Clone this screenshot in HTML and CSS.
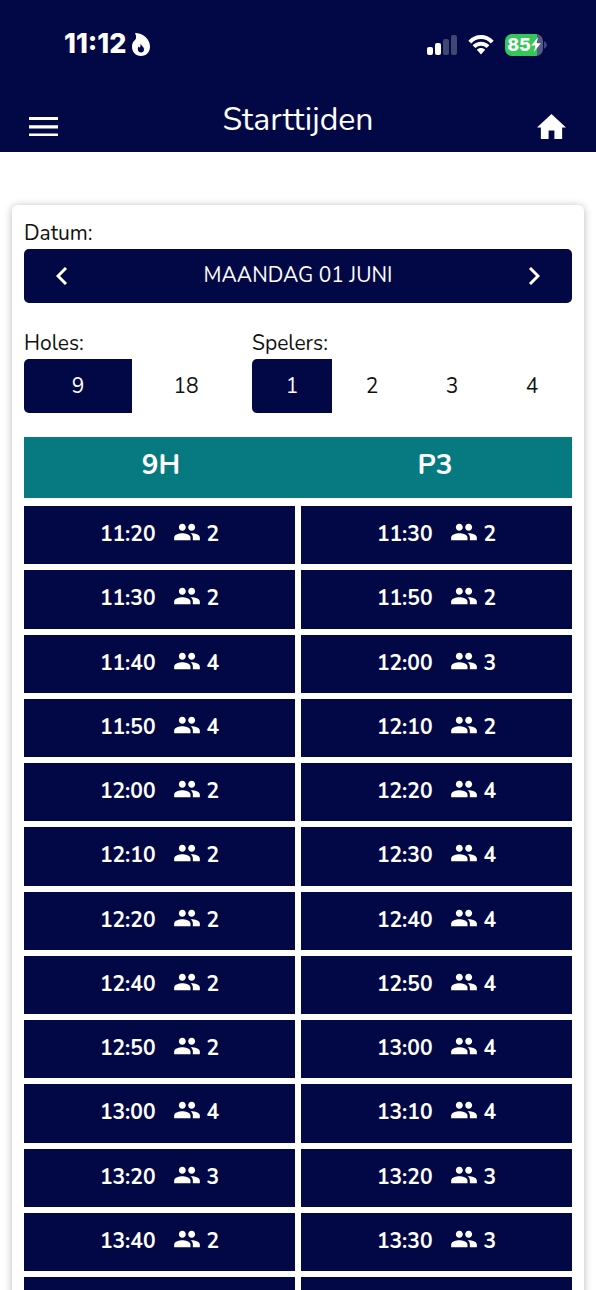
FILE: index.html
```html
<!DOCTYPE html>
<html lang="nl">
<head>
<meta charset="utf-8">
<meta name="viewport" content="width=device-width, initial-scale=1">
<title>Starttijden</title>
<link rel="stylesheet" href="styles.css">
</head>
<body>
<svg class="sprite" aria-hidden="true">
  <symbol id="people" viewBox="0 0 24 24"><path d="M16 11c1.660 0 2.990-1.340 2.990-3S17.660 5 16 5s-3 1.340-3 3 1.340 3 3 3zm-8 0c1.660 0 2.990-1.340 2.990-3S9.660 5 8 5 5 6.340 5 8s1.340 3 3 3zm0 2c-2.330 0-7 1.170-7 3.500V19h14v-2.500c0-2.330-4.670-3.500-7-3.500zm8 0c-.29 0-.62.020-.97.050 1.160.84 1.970 1.970 1.970 3.450V19h6v-2.500c0-2.330-4.670-3.500-7-3.500z"/></symbol>
</svg>
<header class="top">
  <div class="status">
    <div class="status-left">
      <span class="clock">11:12</span>
      <svg class="flame" viewBox="0 0 18 23" aria-hidden="true"><path class="flame-body" d="M3 0C11 0 18 6 18 13.500C18 19 14.500 23 9 23S0 19 0 13.500C0 10.500 1 8.500 3 7C4.500 5.500 4.500 3 3 0Z"/><path class="flame-core" d="M8.500 10C9 13 12 13.500 12 16.200C12 18.500 10.800 19.500 9.200 19.500C7 19.500 5.800 18 5.800 16.200C5.800 15 6.200 14 6.700 13.500L7.800 14.800C8.500 13.500 8.700 12 8.500 10Z"/></svg>
    </div>
    <div class="status-right">
      <svg class="signal" viewBox="0 0 30 20" aria-hidden="true"><rect x="0" y="12" width="6" height="8" rx="2"/><rect x="8" y="8" width="6" height="12" rx="2"/><rect class="dim" x="16" y="4" width="6" height="16" rx="2"/><rect class="dim" x="24" y="0" width="6" height="20" rx="2"/></svg>
      <svg class="wifi" viewBox="0 0 26 20" aria-hidden="true"><path class="arc" d="M1.800 7.200C8 .4 18 .4 24.200 7.200M6 11.700C10 7.600 16 7.600 20 11.700"/><path d="M8.800 14.800C11.200 12.400 14.800 12.400 17.200 14.800L13 19.500Z"/></svg>
      <div class="battery"><span class="level">85</span><svg class="bolt" viewBox="0 0 9 14" aria-hidden="true"><path d="M6.500 0L0 8H4L2.500 14L9 5.800H5Z"/></svg></div>
      <svg class="tip" viewBox="0 0 3 8" aria-hidden="true"><path d="M0 0Q3 1.500 3 4T0 8Z"/></svg>
    </div>
  </div>
  <nav class="bar">
    <button class="icon-button" type="button" aria-label="Menu"><svg viewBox="0 0 28 19"><path d="M0 0h28v3H0zM0 8h28v3H0zM0 16h28v3H0z"/></svg></button>
    <h1 class="title">Starttijden</h1>
    <a class="icon-button home" href="#" aria-label="Home"><svg viewBox="0 0 30 26"><path d="M12 26v-9h6v9h8V14h4L15 0 0 14h4v12z"/></svg></a>
  </nav>
</header>
<main class="content">
  <section class="card">
    <div class="label" id="date-label">Datum:</div>
    <div class="date" role="group" aria-labelledby="date-label">
      <button class="step" type="button" aria-label="Vorige dag"><svg viewBox="0 0 12 18"><path d="M10 1L2 9L10 17"/></svg></button>
      <span>MAANDAG 01 JUNI</span>
      <button class="step" type="button" aria-label="Volgende dag"><svg viewBox="0 0 12 18"><path d="M2 1L10 9L2 17"/></svg></button>
    </div>
    <div class="filters">
      <fieldset class="filter">
        <legend class="label">Holes:</legend>
        <div class="segments">
          <label class="segment"><input type="radio" name="holes" checked><span>9</span></label>
          <label class="segment"><input type="radio" name="holes"><span>18</span></label>
        </div>
      </fieldset>
      <fieldset class="filter">
        <legend class="label">Spelers:</legend>
        <div class="segments">
          <label class="segment"><input type="radio" name="players" checked><span>1</span></label>
          <label class="segment"><input type="radio" name="players"><span>2</span></label>
          <label class="segment"><input type="radio" name="players"><span>3</span></label>
          <label class="segment"><input type="radio" name="players"><span>4</span></label>
        </div>
      </fieldset>
    </div>
    <div class="courses"><h2 class="course">9H</h2><h2 class="course">P3</h2></div>
    <div class="slots">
      <button class="slot" type="button"><span>11:20</span><svg class="people"><use href="#people"/></svg><span>2</span></button>
      <button class="slot" type="button"><span>11:30</span><svg class="people"><use href="#people"/></svg><span>2</span></button>
      <button class="slot" type="button"><span>11:30</span><svg class="people"><use href="#people"/></svg><span>2</span></button>
      <button class="slot" type="button"><span>11:50</span><svg class="people"><use href="#people"/></svg><span>2</span></button>
      <button class="slot" type="button"><span>11:40</span><svg class="people"><use href="#people"/></svg><span>4</span></button>
      <button class="slot" type="button"><span>12:00</span><svg class="people"><use href="#people"/></svg><span>3</span></button>
      <button class="slot" type="button"><span>11:50</span><svg class="people"><use href="#people"/></svg><span>4</span></button>
      <button class="slot" type="button"><span>12:10</span><svg class="people"><use href="#people"/></svg><span>2</span></button>
      <button class="slot" type="button"><span>12:00</span><svg class="people"><use href="#people"/></svg><span>2</span></button>
      <button class="slot" type="button"><span>12:20</span><svg class="people"><use href="#people"/></svg><span>4</span></button>
      <button class="slot" type="button"><span>12:10</span><svg class="people"><use href="#people"/></svg><span>2</span></button>
      <button class="slot" type="button"><span>12:30</span><svg class="people"><use href="#people"/></svg><span>4</span></button>
      <button class="slot" type="button"><span>12:20</span><svg class="people"><use href="#people"/></svg><span>2</span></button>
      <button class="slot" type="button"><span>12:40</span><svg class="people"><use href="#people"/></svg><span>4</span></button>
      <button class="slot" type="button"><span>12:40</span><svg class="people"><use href="#people"/></svg><span>2</span></button>
      <button class="slot" type="button"><span>12:50</span><svg class="people"><use href="#people"/></svg><span>4</span></button>
      <button class="slot" type="button"><span>12:50</span><svg class="people"><use href="#people"/></svg><span>2</span></button>
      <button class="slot" type="button"><span>13:00</span><svg class="people"><use href="#people"/></svg><span>4</span></button>
      <button class="slot" type="button"><span>13:00</span><svg class="people"><use href="#people"/></svg><span>4</span></button>
      <button class="slot" type="button"><span>13:10</span><svg class="people"><use href="#people"/></svg><span>4</span></button>
      <button class="slot" type="button"><span>13:20</span><svg class="people"><use href="#people"/></svg><span>3</span></button>
      <button class="slot" type="button"><span>13:20</span><svg class="people"><use href="#people"/></svg><span>3</span></button>
      <button class="slot" type="button"><span>13:40</span><svg class="people"><use href="#people"/></svg><span>2</span></button>
      <button class="slot" type="button"><span>13:30</span><svg class="people"><use href="#people"/></svg><span>3</span></button>
      <button class="slot" type="button"></button>
      <button class="slot" type="button"></button>
    </div>
  </section>
</main>
</body>
</html>
```
FILE: styles.css
```css
:root {
  --navy: #020845;
  --teal: #067a80;
}

* { box-sizing: border-box; }

body {
  margin: 0;
  height: 100vh;
  display: flex;
  flex-direction: column;
  overflow: hidden;
  background: #fff;
  color: #111;
  font: 21px/1.2 Nunito, Lato, sans-serif;
}

button {
  border: 0;
  padding: 0;
  background: none;
  color: inherit;
  font: inherit;
}

svg { display: block; fill: currentColor; }

.sprite { display: none; }

.top {
  flex: none;
  background: var(--navy);
  color: #fff;
}

.status {
  display: flex;
  align-items: center;
  justify-content: space-between;
  height: 89px;
  padding: 0 49px 0 64px;
}

.status-left,
.status-right { display: flex; align-items: center; }

.status-left { gap: 5px; }

.clock {
  font-family: Inter, sans-serif;
  font-size: 27px;
  font-weight: 800;
}

.flame { width: 18px; height: 23px; }
.flame-core { fill: var(--navy); }

.signal { width: 30px; height: 20px; margin-right: 11px; }
.dim { opacity: 0.25; }

.wifi { width: 26px; height: 20px; margin-right: 11px; }
.arc { fill: none; stroke: currentColor; stroke-width: 4; }

.battery {
  display: flex;
  align-items: center;
  justify-content: center;
  width: 38px;
  height: 22px;
  border-radius: 7px;
  background: linear-gradient(90deg, #34c759 85%, #565b86 85%);
}

.level {
  font-family: Inter, sans-serif;
  font-size: 18px;
  font-weight: 800;
}

.bolt { width: 10px; height: 15px; }
.tip { width: 3px; height: 8px; margin-left: 1px; color: #41467a; }

.bar {
  display: flex;
  align-items: center;
  justify-content: space-between;
  height: 63px;
  padding: 0 29px;
}

.title {
  margin: 0;
  font-size: 32px;
  font-weight: 400;
}

.icon-button { width: 30px; padding-top: 12px; color: #fff; }
.icon-button svg { width: 29px; }

.content {
  flex: 1;
  min-height: 0;
  padding: 53px 12px 0;
  overflow: hidden;
}

.card {
  padding: 12px;
  border-radius: 6px;
  background: #fff;
  box-shadow: 0 1px 8px rgba(0, 0, 0, 0.28);
}

.label { padding: 0; line-height: 32px; }

.date {
  display: flex;
  align-items: center;
  justify-content: space-between;
  height: 54px;
  padding: 0 16px;
  border-radius: 5px;
  background: var(--navy);
  color: #fff;
}

.step { padding: 12px 16px; }

.step svg {
  width: 12px;
  height: 18px;
  fill: none;
  stroke: currentColor;
  stroke-width: 3;
}

.filters {
  display: grid;
  grid-template-columns: 27fr 40fr;
  gap: 12px;
  margin: 24px 0;
}

.filter { min-width: 0; margin: 0; padding: 0; border: 0; }

.segments {
  display: flex;
  border-radius: 5px;
  overflow: hidden;
}

.segment { flex: 1; }

.segment input {
  position: absolute;
  opacity: 0;
  pointer-events: none;
}

.segment span { display: block; line-height: 54px; text-align: center; }

.segment input:checked + span { background: var(--navy); color: #fff; }

.courses {
  display: grid;
  grid-template-columns: 1fr 1fr;
  margin-bottom: 8px;
  background: var(--teal);
  color: #fff;
}

.course {
  margin: 0;
  padding-bottom: 5px;
  font-size: 28px;
  line-height: 56px;
  text-align: center;
}

.slots {
  display: grid;
  grid-template-columns: 1fr 1fr;
  gap: 6px;
}

.slot {
  display: flex;
  align-items: center;
  justify-content: center;
  min-height: 58px;
  padding: 15px 0 17px;
  background: var(--navy);
  color: #fff;
  font-weight: 700;
  line-height: 1.25;
}

.people { width: 28px; height: 28px; margin: -4px 6px 0 17px; }
```
